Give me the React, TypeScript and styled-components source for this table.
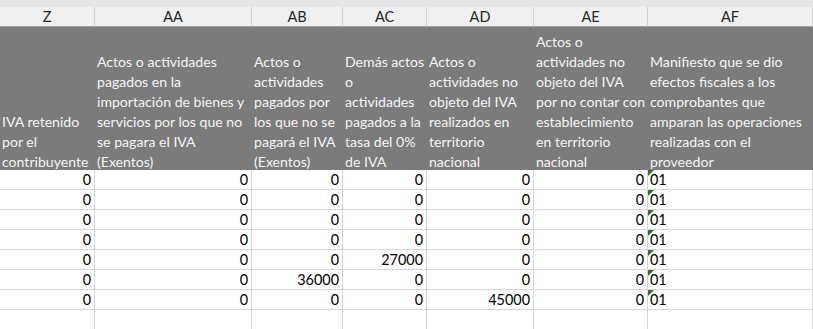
import React from "react";
import styled, { createGlobalStyle } from "styled-components";

const GlobalStyle = createGlobalStyle`
  html, body {
    margin: 0;
    padding: 0;
    background: #ffffff;
    overflow: hidden;
  }
  body {
    font-family: Lato, "Liberation Sans", sans-serif;
  }
`;

// column widths include the 1px right grid line
const COLS = [95, 157, 91, 84, 107, 114, 165];

const Sheet = styled.div`
  width: 813px;
  height: 329px;
  overflow: hidden;
  background: #ffffff;
`;

const TopStrip = styled.div`
  height: 7px;
  background: #e6e6e6;
`;

const Grid = styled.div`
  display: grid;
  grid-template-columns: ${COLS.map((c) => `${c}px`).join(" ")};
`;

const ColLetter = styled.div`
  height: 20px;
  box-sizing: border-box;
  background: #f0f0f0;
  border-right: 1px solid #cfcfcf;
  border-bottom: 1px solid #9f9f9f;
  display: flex;
  align-items: center;
  justify-content: center;
  font-size: 14.5px;
  color: #262626;
`;

const HeaderCell = styled.div`
  height: 143px;
  box-sizing: border-box;
  background: #7b7b7b;
  padding: 0 0 0 2px;
  display: flex;
  flex-direction: column;
  justify-content: flex-end;
  color: #f5f5f5;
  font-size: 14.1px;
  overflow: hidden;
`;

const HeaderLine = styled.span`
  display: block;
  height: 20px;
  box-sizing: border-box;
  padding-top: 3px;
  line-height: 17px;
  white-space: nowrap;
`;

const Cell = styled.div<{ $align?: "left" | "right" }>`
  position: relative;
  height: 20px;
  box-sizing: border-box;
  border-right: 1px solid #d6d6d6;
  border-bottom: 1px solid #d6d6d6;
  padding: 1px 3px 0 2px;
  display: flex;
  align-items: center;
  justify-content: ${(p) => (p.$align === "left" ? "flex-start" : "flex-end")};
  font-size: 14.4px;
  line-height: 18px;
  color: #000000;
`;

// Excel's "number stored as text" marker
const TextFlag = styled.span`
  position: absolute;
  top: 0;
  left: 0;
  width: 0;
  height: 0;
  border-top: 6px solid #1f7a1f;
  border-right: 6px solid transparent;
`;

const letters = ["Z", "AA", "AB", "AC", "AD", "AE", "AF"];

const headers: string[][] = [
  ["IVA retenido", "por el", "contribuyente"],
  [
    "Actos o actividades",
    "pagados en la",
    "importación de bienes y",
    "servicios por los que no",
    "se pagara el IVA",
    "(Exentos)",
  ],
  ["Actos o", "actividades", "pagados por", "los que no se", "pagará el IVA", "(Exentos)"],
  ["Demás actos", "o", "actividades", "pagados a la", "tasa del 0%", "de IVA"],
  ["Actos o", "actividades no", "objeto del IVA", "realizados en", "territorio", "nacional"],
  [
    "Actos o",
    "actividades no",
    "objeto del IVA",
    "por no contar con",
    "establecimiento",
    "en territorio",
    "nacional",
  ],
  [
    "Manifiesto que se dio",
    "efectos fiscales a los",
    "comprobantes que",
    "amparan las operaciones",
    "realizadas con el",
    "proveedor",
  ],
];

const rows: (number | null)[][] = [
  [0, 0, 0, 0, 0, 0],
  [0, 0, 0, 0, 0, 0],
  [0, 0, 0, 0, 0, 0],
  [0, 0, 0, 0, 0, 0],
  [0, 0, 0, 27000, 0, 0],
  [0, 0, 36000, 0, 0, 0],
  [0, 0, 0, 0, 45000, 0],
];

const App: React.FC = () => {
  return (
    <>
      <GlobalStyle />
      <Sheet>
        <TopStrip />
        <Grid>
          {letters.map((l) => (
            <ColLetter key={l}>{l}</ColLetter>
          ))}
          {headers.map((lines, i) => (
            <HeaderCell key={i}>
              {lines.map((t, j) => (
                <HeaderLine key={j}>{t}</HeaderLine>
              ))}
            </HeaderCell>
          ))}
          {rows.map((r, i) => (
            <React.Fragment key={i}>
              {r.map((v, j) => (
                <Cell key={j}>{v}</Cell>
              ))}
              <Cell $align="left">
                <TextFlag />
                01
              </Cell>
            </React.Fragment>
          ))}
          {letters.map((l) => (
            <Cell key={`empty-${l}`} />
          ))}
        </Grid>
      </Sheet>
    </>
  );
};

export default App;
